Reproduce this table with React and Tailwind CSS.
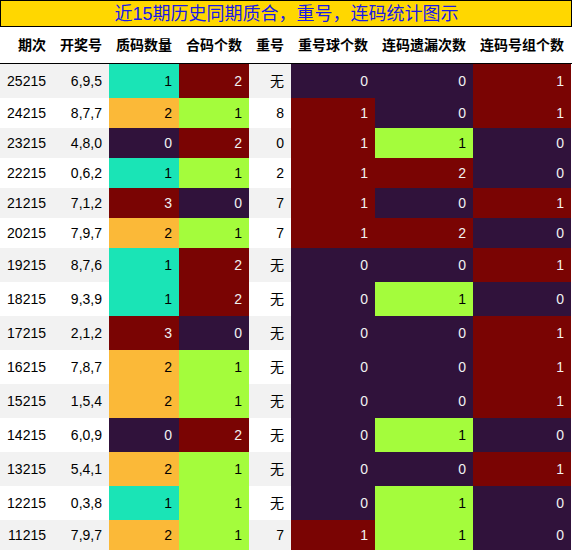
const rows = [
  ['25215', '6,9,5', 1, 2, '无', 0, 0, 1],
  ['24215', '8,7,7', 2, 1, '8', 1, 0, 1],
  ['23215', '4,8,0', 0, 2, '0', 1, 1, 0],
  ['22215', '0,6,2', 1, 1, '2', 1, 2, 0],
  ['21215', '7,1,2', 3, 0, '7', 1, 0, 1],
  ['20215', '7,9,7', 2, 1, '7', 1, 2, 0],
  ['19215', '8,7,6', 1, 2, '无', 0, 0, 1],
  ['18215', '9,3,9', 1, 2, '无', 0, 1, 0],
  ['17215', '2,1,2', 3, 0, '无', 0, 0, 1],
  ['16215', '7,8,7', 2, 1, '无', 0, 0, 1],
  ['15215', '1,5,4', 2, 1, '无', 0, 0, 1],
  ['14215', '6,0,9', 0, 2, '无', 0, 1, 0],
  ['13215', '5,4,1', 2, 1, '无', 0, 0, 1],
  ['12215', '0,3,8', 1, 1, '无', 0, 1, 0],
  ['11215', '7,9,7', 2, 1, '7', 1, 1, 0],
];

const headers = ['期次', '开奖号', '质码数量', '合码个数', '重号', '重号球个数', '连码遗漏次数', '连码号组个数'];

// turbo colormap steps
const purple = 'bg-[#30123b] text-[#f1f1f1]';
const teal = 'bg-[#1ae4b6] text-black';
const lime = 'bg-[#a4fc3c] text-black';
const orange = 'bg-[#fbb938] text-black';
const maroon = 'bg-[#7a0403] text-[#f1f1f1]';

const scale4 = [purple, teal, orange, maroon];
const scale3 = [purple, lime, maroon];
const scale2 = [purple, maroon];

const grid = 'grid grid-cols-[53px_56px_70px_70px_42px_84px_98px_98px]';

function Cell({ children, className = '' }) {
  return <div className={`flex items-center justify-end px-[7px] whitespace-nowrap ${className}`}>{children}</div>;
}

export default function App() {
  return (
    <div className="w-[572px] bg-white text-[14px] text-black font-['Liberation_Sans','Noto_Sans_CJK_SC',sans-serif]">
      <div className="h-[27px] border border-black bg-[#ffd700] flex items-center justify-center pl-[1px] text-[18px] text-[#1a1ae8] leading-none">
        近15期历史同期质合，重号，连码统计图示
      </div>

      <div className={`${grid} h-[37px] border-b border-black font-bold`}>
        {headers.map((h) => (
          <Cell key={h}>{h}</Cell>
        ))}
      </div>

      {rows.map((r, i) => {
        const stripe = i % 2 === 0 ? 'bg-[#f2f2f2]' : 'bg-white';
        const tall = r[4] === '无';
        return (
          <div key={r[0]} className={`${grid} ${tall ? 'h-[34px]' : 'h-[30px]'}`}>
            <Cell className={stripe}>{r[0]}</Cell>
            <Cell className={stripe}>{r[1]}</Cell>
            <Cell className={scale4[r[2]]}>{r[2]}</Cell>
            <Cell className={scale3[r[3]]}>{r[3]}</Cell>
            <Cell className={stripe}>{r[4]}</Cell>
            <Cell className={scale2[r[5]]}>{r[5]}</Cell>
            <Cell className={scale3[r[6]]}>{r[6]}</Cell>
            <Cell className={scale2[r[7]]}>{r[7]}</Cell>
          </div>
        );
      })}
    </div>
  );
}
